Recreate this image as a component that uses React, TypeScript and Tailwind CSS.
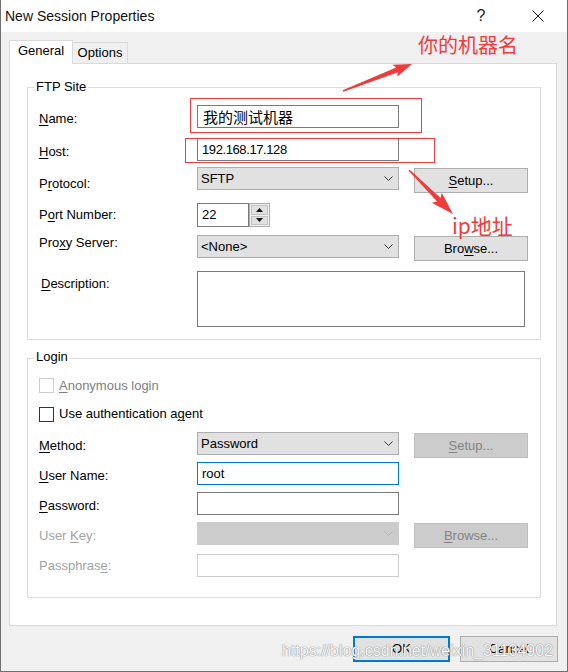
import React from "react";

const RED = "#ef3b3b";

function U({ children }: { children: React.ReactNode }) {
  return <span className="underline underline-offset-[2px] decoration-1">{children}</span>;
}

function Chevron({ color = "#333333" }: { color?: string }) {
  return (
    <svg width="9" height="5" viewBox="0 0 9 5" className="block">
      <path d="M0.5 0.5 L4.5 4.5 L8.5 0.5" fill="none" stroke={color} strokeWidth="1" />
    </svg>
  );
}

function Select({ value, disabled = false }: { value?: string; disabled?: boolean }) {
  return (
    <div
      className={
        disabled
          ? "w-[202px] h-[23px] shrink-0 bg-[#cccccc] border border-[#cccccc] flex items-center justify-between pl-[3px] pr-[5px]"
          : "w-[202px] h-[23px] shrink-0 bg-[#e1e1e1] border border-[#adadad] flex items-center justify-between pl-[3px] pr-[5px]"
      }
    >
      <span className="leading-[16px]">{value}</span>
      <Chevron color={disabled ? "#b3b3b3" : "#333333"} />
    </div>
  );
}

// Side button; its height stays inside the 23px row so following rows are not pushed down
function Button({ children, disabled = false }: { children: React.ReactNode; disabled?: boolean }) {
  return (
    <div className="ml-[15px] h-[23px] shrink-0">
      <div
        className={
          disabled
            ? "mt-[1px] w-[114px] h-[25px] bg-[#cccccc] border border-[#bfbfbf] text-[#838383] flex items-center justify-center leading-[16px]"
            : "mt-[1px] w-[114px] h-[25px] bg-[#e1e1e1] border border-[#adadad] flex items-center justify-center leading-[16px]"
        }
      >
        {children}
      </div>
    </div>
  );
}

// Tapered callout arrow, computed from tail and tip points
function arrowPoints(
  tx: number,
  ty: number,
  hx: number,
  hy: number,
  tailW: number,
  neckW: number,
  headW: number,
  headLen: number
) {
  const len = Math.hypot(hx - tx, hy - ty);
  const dx = (hx - tx) / len;
  const dy = (hy - ty) / len;
  const nx = -dy;
  const ny = dx;
  const neckX = hx - dx * headLen;
  const neckY = hy - dy * headLen;
  const barbX = hx - dx * headLen * 1.15;
  const barbY = hy - dy * headLen * 1.15;
  const pts: [number, number][] = [
    [tx + (nx * tailW) / 2, ty + (ny * tailW) / 2],
    [neckX + (nx * neckW) / 2, neckY + (ny * neckW) / 2],
    [barbX + (nx * headW) / 2, barbY + (ny * headW) / 2],
    [hx, hy],
    [barbX - (nx * headW) / 2, barbY - (ny * headW) / 2],
    [neckX - (nx * neckW) / 2, neckY - (ny * neckW) / 2],
    [tx - (nx * tailW) / 2, ty - (ny * tailW) / 2],
  ];
  return pts.map((p) => `${p[0].toFixed(1)},${p[1].toFixed(1)}`).join(" ");
}

export default function App() {
  return (
    <div className="relative w-[568px] h-[672px] bg-[#f0f0f0] border-x border-b border-[#6f6f6f] font-['Liberation_Sans',Arial,sans-serif] text-[13px] text-black overflow-hidden">
      {/* title bar */}
      <div className="h-[32px] bg-white flex items-center">
        <div className="pl-[4px] text-[14px] leading-[16px] text-[#111111]">New Session Properties</div>
        <div className="ml-auto flex h-full">
          <div className="w-[56px] flex items-center justify-center text-[16px] leading-[16px] text-[#222222]">?</div>
          <div className="w-[58px] flex items-center justify-center">
            <svg width="12" height="12" viewBox="0 0 12 12" className="block">
              <path d="M0.5 0.5 L11.5 11.5 M11.5 0.5 L0.5 11.5" stroke="#111111" strokeWidth="1" fill="none" />
            </svg>
          </div>
        </div>
      </div>

      {/* tabs */}
      <div className="mt-[8px] ml-[8px] flex items-end h-[23px]">
        <div className="relative z-10 w-[64px] h-[24px] -mb-px bg-white border border-b-0 border-[#d9d9d9] text-center leading-[16px] pt-[2px]">
          General
        </div>
        <div className="w-[55px] h-[21px] bg-[#f0f0f0] border border-l-0 border-b-0 border-[#d9d9d9] text-center leading-[16px] pt-[2px]">
          Options
        </div>
      </div>

      {/* tab panel */}
      <div className="ml-[8px] w-[548px] h-[563px] bg-white border border-[#d9d9d9]">
        {/* FTP Site */}
        <div className="relative mt-[23px] ml-[17px] w-[514px] h-[253px] border border-[#dcdcdc]">
          <div className="absolute left-[6px] top-[-9px] px-[2px] bg-white leading-[16px]">FTP Site</div>

          <div className="flex items-start mt-[17px] pl-[11px]">
            <div className="w-[158px] mt-[6px] leading-[16px]">
              <U>N</U>ame:
            </div>
            <div className="w-[202px] h-[23px] border border-[#7a7a7a] bg-white flex items-center pl-[5px] font-['Noto_Sans_CJK_SC','Noto_Sans',sans-serif] text-[15px] leading-[18px]">
              我的测试机器
            </div>
          </div>

          <div className="flex items-start mt-[10px] pl-[11px]">
            <div className="w-[158px] mt-[6px] leading-[16px]">
              <U>H</U>ost:
            </div>
            <div className="w-[202px] h-[23px] border border-[#7a7a7a] bg-white flex items-center pl-[4px] leading-[16px] tracking-[-0.4px]">
              192.168.17.128
            </div>
          </div>

          <div className="flex items-start mt-[6px] pl-[11px]">
            <div className="w-[158px] mt-[9px] leading-[16px]">
              P<U>r</U>otocol:
            </div>
            <Select value="SFTP" />
            <Button>
              <span>
                <U>S</U>etup...
              </span>
            </Button>
          </div>

          <div className="flex items-start mt-[11px] pl-[11px]">
            <div className="w-[158px] mt-[4px] leading-[16px]">
              P<U>o</U>rt Number:
            </div>
            <div className="w-[52px] h-[24px] border border-[#7a7a7a] bg-white flex items-center pl-[4px] leading-[16px]">
              22
            </div>
            <div className="w-[21px] h-[24px] border border-[#adadad] bg-[#f0f0f0] flex flex-col p-px gap-px">
              <div className="flex-1 bg-[#e1e1e1] border border-[#c4c4c4] flex items-center justify-center">
                <svg width="7" height="4" viewBox="0 0 7 4" className="block">
                  <path d="M0 4 L3.5 0 L7 4 Z" fill="#111111" />
                </svg>
              </div>
              <div className="flex-1 bg-[#e1e1e1] border border-[#c4c4c4] flex items-center justify-center">
                <svg width="7" height="4" viewBox="0 0 7 4" className="block">
                  <path d="M0 0 L7 0 L3.5 4 Z" fill="#111111" />
                </svg>
              </div>
            </div>
          </div>

          <div className="flex items-start mt-[8px] pl-[11px]">
            <div className="w-[158px] mt-0 leading-[16px]">
              Pro<U>x</U>y Server:
            </div>
            <Select value="<None>" />
            <Button>
              <span>
                Bro<U>w</U>se...
              </span>
            </Button>
          </div>

          <div className="flex items-start mt-[13px] pl-[11px]">
            <div className="w-[158px] mt-[5px] pl-[2px] leading-[16px]">
              <U>D</U>escription:
            </div>
            <div className="w-[328px] h-[56px] border border-[#7a7a7a] bg-white" />
          </div>
        </div>

        {/* Login */}
        <div className="relative mt-[18px] ml-[17px] w-[514px] h-[240px] border border-[#dcdcdc]">
          <div className="absolute left-[6px] top-[-10px] px-[2px] bg-white leading-[16px]">Login</div>

          <div className="flex items-start mt-[19px] pl-[11px]">
            <div className="w-[15px] h-[15px] border border-[#cccccc] bg-white" />
            <div className="ml-[5px] leading-[16px] text-[#808080]">
              <U>A</U>nonymous login
            </div>
          </div>

          <div className="flex items-start mt-[13px] pl-[11px]">
            <div className="w-[15px] h-[15px] border border-[#333333] bg-white" />
            <div className="ml-[5px] -mt-px leading-[16px]">
              Use authentication a<U>g</U>ent
            </div>
          </div>

          <div className="flex items-start mt-[10px] pl-[11px]">
            <div className="w-[158px] mt-[6px] leading-[16px]">
              <U>M</U>ethod:
            </div>
            <Select value="Password" />
            <Button disabled>
              <span>
                <U>S</U>etup...
              </span>
            </Button>
          </div>

          <div className="flex items-start mt-[7px] pl-[11px]">
            <div className="w-[158px] mt-[6px] leading-[16px]">
              <U>U</U>ser Name:
            </div>
            <div className="w-[202px] h-[23px] border border-[#0078d7] bg-white flex items-center pl-[4px] leading-[16px]">
              root
            </div>
          </div>

          <div className="flex items-start mt-[7px] pl-[11px]">
            <div className="w-[158px] mt-[6px] leading-[16px]">
              <U>P</U>assword:
            </div>
            <div className="w-[202px] h-[23px] border border-[#7a7a7a] bg-white" />
          </div>

          <div className="flex items-start mt-[7px] pl-[11px]">
            <div className="w-[158px] mt-[6px] leading-[16px] text-[#a3a3a3]">
              User <U>K</U>ey:
            </div>
            <Select disabled />
            <Button disabled>
              <span>
                <U>B</U>rowse...
              </span>
            </Button>
          </div>

          <div className="flex items-start mt-[9px] pl-[11px]">
            <div className="w-[158px] mt-[4px] leading-[16px] text-[#a3a3a3]">
              Passphras<U>e</U>:
            </div>
            <div className="w-[202px] h-[23px] border border-[#cccccc] bg-white" />
          </div>
        </div>
      </div>

      {/* dialog buttons */}
      <div className="mt-[10px] flex justify-end gap-[10px] pr-[9px]">
        <div className="w-[97px] h-[26px] border-2 border-[#0078d7] bg-[#e1e1e1] flex items-center justify-center leading-[16px]">
          OK
        </div>
        <div className="w-[98px] h-[26px] border border-[#adadad] bg-[#e1e1e1] flex items-center justify-center leading-[16px]">
          Cancel
        </div>
      </div>

      {/* red callouts drawn over the dialog */}
      <svg className="absolute -left-px top-0 pointer-events-none" width="568" height="672" viewBox="0 0 568 672">
        <rect x="190.5" y="98.5" width="231" height="34" fill="none" stroke={RED} strokeWidth="1" />
        <rect x="185.5" y="138.5" width="249" height="24" fill="none" stroke={RED} strokeWidth="1" />
        <polygon points={arrowPoints(343, 91, 412, 64, 1.5, 5, 13, 16)} fill={RED} />
        <polygon points={arrowPoints(409, 170, 453, 214, 1.5, 5, 14, 20)} fill={RED} />
      </svg>
      <div className="absolute left-[417px] top-[35px] text-[20px] leading-[20px] text-[#ef3b3b] font-['Noto_Sans_CJK_SC',sans-serif] whitespace-nowrap">
        你的机器名
      </div>
      <div className="absolute left-[451px] top-[215px] text-[21px] leading-[21px] text-[#ef3b3b] font-['Noto_Sans_CJK_SC',sans-serif] whitespace-nowrap">
        ip地址
      </div>

      {/* site watermark */}
      <div className="absolute left-[281px] top-[643px] text-[16px] leading-[16px] text-[#f6f6f6] whitespace-nowrap pointer-events-none [text-shadow:0_0_1px_#8c8c8c,0_0_1px_#8c8c8c]">
        https://blog.csdn.net/weixin_31134902
      </div>
    </div>
  );
}
